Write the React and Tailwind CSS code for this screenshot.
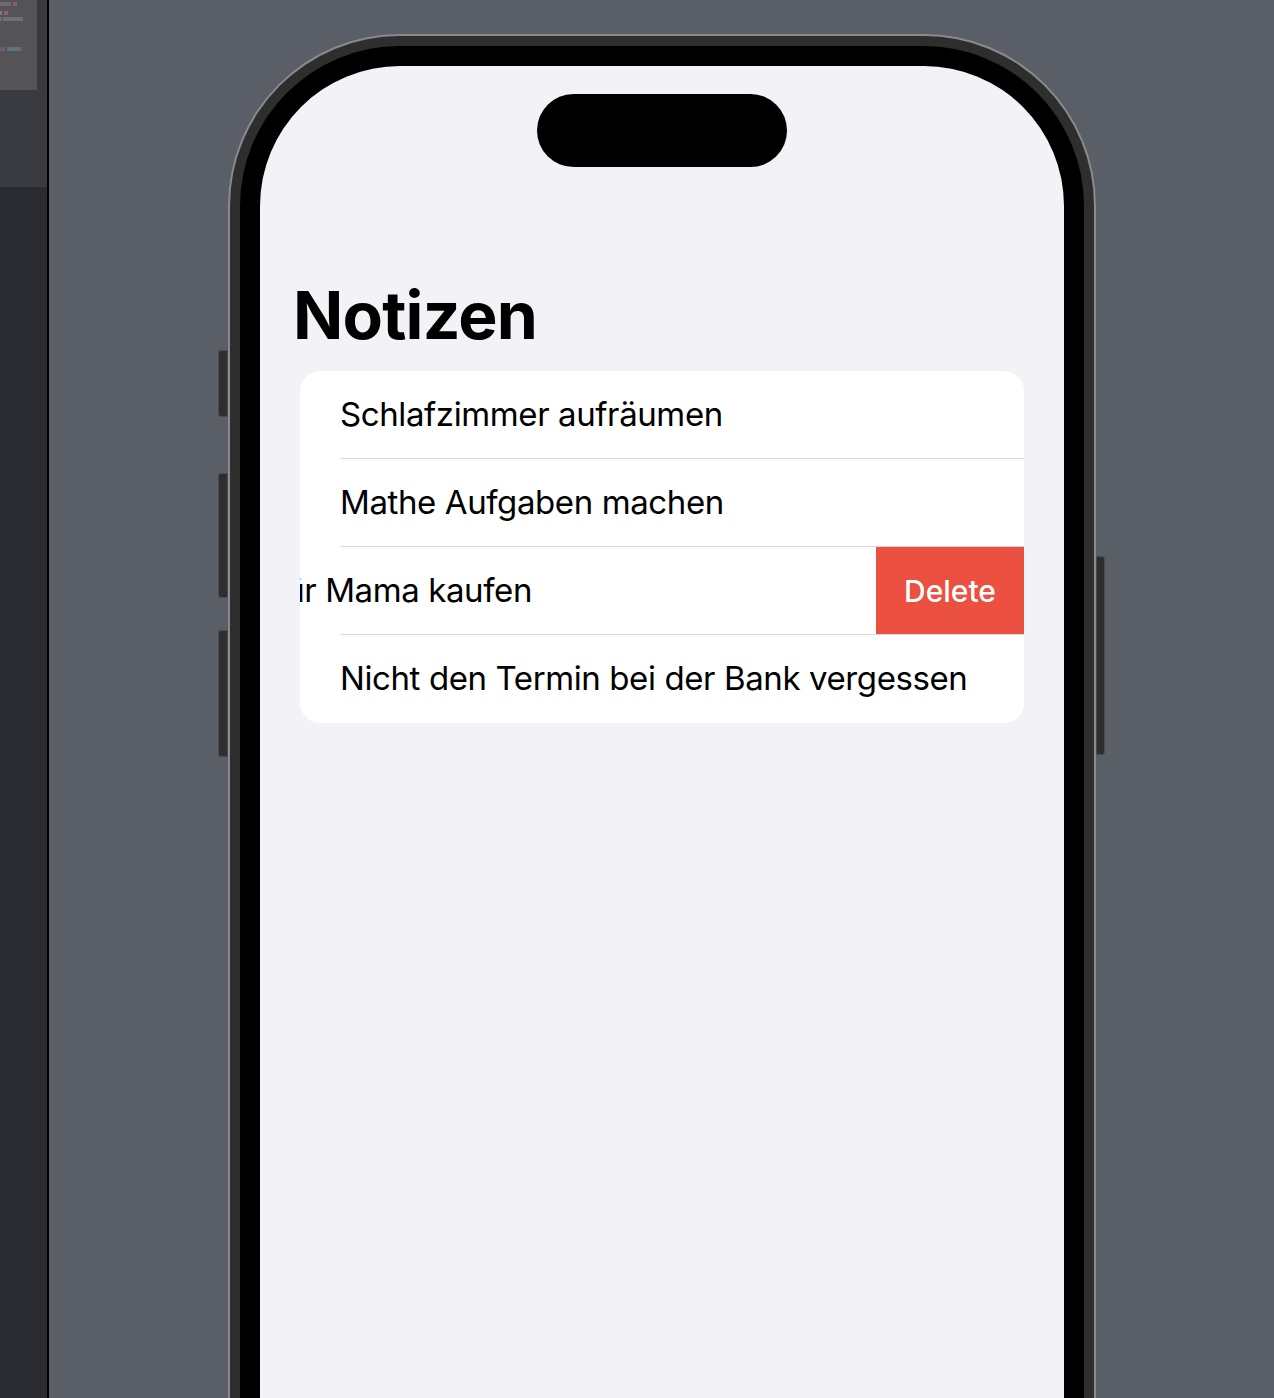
import { useState } from 'react';

const notes = [
  'Schlafzimmer aufräumen',
  'Mathe Aufgaben machen',
  'Geschenk für Mama kaufen',
  'Nicht den Termin bei der Bank vergessen',
];

function Sidebar() {
  return (
    <div className="w-[49px] shrink-0 flex flex-col border-r-2 border-black">
      <div className="h-[187px] bg-[#3a3b40] flex">
        <div className="w-[37px] h-[90px] bg-[#545457] flex flex-col gap-[8px] pt-[2px]">
          <div className="flex gap-[2px] items-center">
            <div className="w-[11px] h-[4px] bg-[#6c6c70]" />
            <div className="w-[4px] h-[4px] bg-[#8a5a72]" />
          </div>
          <div className="flex gap-[2px] items-center -mt-[3px]">
            <div className="w-[2px] h-[4px] bg-[#7a7a80]" />
            <div className="w-[4px] h-[4px] bg-[#9a5a78]" />
          </div>
          <div className="flex gap-[1px] items-center -mt-[6px]">
            <div className="w-[2px] h-[4px] bg-[#6a6a90]" />
            <div className="w-[20px] h-[4px] bg-[#707074]" />
          </div>
          <div className="flex gap-[2px] items-center mt-[18px]">
            <div className="w-[5px] h-[4px] bg-[#6a5e80]" />
            <div className="w-[14px] h-[4px] bg-[#5e7670]" />
          </div>
        </div>
      </div>
      <div className="flex-1 bg-[#2b2c31]" />
    </div>
  );
}

function NoteRow({ text, swiped, last }) {
  if (swiped) {
    return (
      <div className="flex h-[88px] relative">
        <div className="flex-1 min-w-0 overflow-hidden flex justify-end items-center pr-[344px]">
          <span className="whitespace-nowrap text-[33px] tracking-[-0.4px]">{text}</span>
        </div>
        <button className="w-[148px] bg-[#eb5040] text-white text-[30px] font-medium flex items-center justify-center">
          Delete
        </button>
        <div className="absolute left-[41px] right-0 bottom-0 h-px bg-[#d6d6da]" />
      </div>
    );
  }
  return (
    <div className="flex h-[88px] relative items-center pl-[40px]">
      <span className="whitespace-nowrap text-[33px] tracking-[-0.4px]">{text}</span>
      {!last && <div className="absolute left-[41px] right-0 bottom-0 h-px bg-[#d6d6da]" />}
    </div>
  );
}

function Phone() {
  const [items] = useState(notes);
  return (
    <div className="relative w-[868px]">
      {/* side buttons */}
      <div className="absolute -left-[10px] top-[316px] w-[10px] h-[67px] rounded-l-[3px] bg-[#2e2e2e] border border-[#4a4c50]" />
      <div className="absolute -left-[10px] top-[439px] w-[10px] h-[125px] rounded-l-[3px] bg-[#2e2e2e] border border-[#4a4c50]" />
      <div className="absolute -left-[10px] top-[596px] w-[10px] h-[127px] rounded-l-[3px] bg-[#2e2e2e] border border-[#4a4c50]" />
      <div className="absolute -right-[9px] top-[522px] w-[9px] h-[199px] rounded-r-[3px] bg-[#2e2e2e] border border-[#4a4c50]" />

      <div className="rounded-t-[172px] border-2 border-b-0 border-[#8a8a8c] bg-[#2e2e2e] pt-[10px] px-[10px]">
        <div className="rounded-t-[160px] bg-black pt-[20px] px-[20px]">
          <div className="rounded-t-[140px] bg-[#f2f2f7] h-[1340px] flex flex-col">
            <div className="flex justify-center pt-[28px]">
              <div className="w-[250px] h-[73px] rounded-full bg-black" />
            </div>
            <h1 className="ml-[33px] mt-[107px] text-[66px] font-bold leading-[82px] tracking-[-0.8px] text-black">
              Notizen
            </h1>
            <div className="mx-[40px] mt-[15px] bg-white rounded-[20px] overflow-hidden text-black">
              {items.map((n, i) => (
                <NoteRow key={n} text={n} swiped={i === 2} last={i === items.length - 1} />
              ))}
            </div>
          </div>
        </div>
      </div>
    </div>
  );
}

export default function App() {
  return (
    <div
      className="w-[1274px] h-[1398px] overflow-hidden flex bg-[#5a5e66]"
      style={{ fontFamily: 'Inter, "Noto Sans", sans-serif' }}
    >
      <Sidebar />
      <div className="flex-1 pl-[179px] pt-[34px]">
        <Phone />
      </div>
    </div>
  );
}
